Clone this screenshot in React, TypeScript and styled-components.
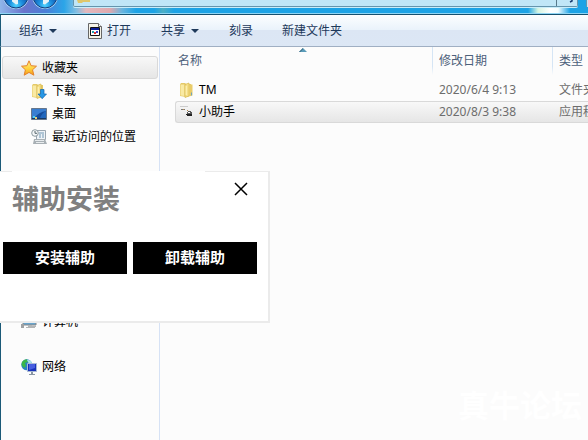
import React from "react";
import styled, { createGlobalStyle } from "styled-components";

const Global = createGlobalStyle`
  *, *::before, *::after { box-sizing: border-box; }
  body {
    margin: 0;
    background: #fcfcfc;
    color: #000;
    font: 12px/20px "Noto Sans", "Noto Sans CJK SC", sans-serif;
  }
  button { font: inherit; }
`;

const Desktop = styled.div`
  position: relative;
  display: flex;
  flex-direction: column;
  height: 100vh;
  overflow: hidden;
`;

const TitleBar = styled.header`
  display: flex;
  align-items: flex-start;
  height: 15px;
  flex: none;
  overflow: hidden;
  border-bottom: 1px solid #15506f;
  box-shadow: inset 0 -1px #8fd6f5;
  background: linear-gradient(90deg, #8fb6ea 0, #6a74cc 24px, #4a7fd8 46px, #2ba5e8 64px, #7fbde2 76px, #e3b8bd 86px, #dfa9ae 110px, #6ab5df 122px, #1ca3e6 136px, #1ca3e6 154px, #4cafc5 163px, #1ca3e6 174px, #1ca3e6 528px, #d5f5e2 538px, #fff 550px, #f4fdff 558px, #1ca3e6 570px);
`;

const NavOrbs = styled.div`
  flex: none;
  width: 73px;
  height: 10px;
  svg { display: block; }
`;

const AddressBar = styled.div`
  flex: 1;
  display: flex;
  justify-content: space-between;
  height: 7px;
  margin-right: 8px;
  padding-left: 3px;
  border: 1px solid #6595ad;
  border-top: 0;
  border-radius: 0 0 2px 2px;
  background: #c0e6f7;
  box-shadow: 0 1px #c9edfa;
  svg { display: block; }
`;

const Refresh = styled.span`
  display: flex;
  justify-content: center;
  width: 21px;
  height: 6px;
  padding-left: 8px;
  border-left: 1px solid #57798b;
`;

const SearchEdge = styled.div`
  width: 2px;
  height: 7px;
  background: #c0e6f7;
  border-left: 1px solid #6595ad;
`;

const Toolbar = styled.nav`
  display: flex;
  flex: none;
  align-items: center;
  height: 32px;
  padding-left: 18px;
  border-left: 1px solid #1b5a78;
  border-bottom: 1px solid #a0afc3;
  background: linear-gradient(#fcfeff 0, #e9f2fb 50%, #dce6f4 50%, #dce7f5 100%);
`;

const ToolButton = styled.button<{ $gap: number }>`
  display: flex;
  align-items: center;
  gap: 5px;
  margin: 0 ${(p) => p.$gap}px 0 0;
  padding: 0;
  border: 0;
  background: none;
  color: #1e395b;
  white-space: nowrap;
`;

const Caret = styled.span`
  margin-left: 1px;
  border: 4px solid transparent;
  border-top-color: #1e395b;
  border-bottom: 0;
`;

const Explorer = styled.div`
  display: flex;
  flex: 1;
  min-height: 0;
  border-left: 1px solid #1b5a78;
`;

const Sidebar = styled.aside`
  display: flex;
  flex: none;
  flex-direction: column;
  width: 159px;
  padding: 9px 1px 0;
  border-right: 1px solid #d6e2f5;
`;

const Group = styled.div<{ $before?: number }>`
  display: flex;
  flex-direction: column;
  margin-top: ${(p) => p.$before ?? 0}px;
`;

const Place = styled.a<{ $nested?: boolean; $active?: boolean }>`
  display: flex;
  align-items: center;
  gap: 5px;
  height: 23px;
  padding-left: ${(p) => (p.$nested ? 28 : 18)}px;
  border: 1px solid ${(p) => (p.$active ? "#d9d9d9" : "transparent")};
  border-radius: 3px;
  background: ${(p) => (p.$active ? "linear-gradient(#f8f8f8, #e6e6e6)" : "none")};
  color: #000;
  text-decoration: none;
  white-space: nowrap;
  svg { flex: none; }
`;

const Files = styled.main`
  flex: 1;
  min-width: 0;
  padding-left: 15px;
  overflow: hidden;
`;

const FileTable = styled.table`
  width: 100%;
  table-layout: fixed;
  border-spacing: 0;
`;

const Head = styled.th<{ $width?: number; $first?: boolean }>`
  position: relative;
  width: ${(p) => (p.$width ? `${p.$width}px` : "auto")};
  height: 32px;
  padding: 4px 0 0 ${(p) => (p.$first ? 3 : 6)}px;
  border-left: ${(p) => (p.$first ? 0 : 1)}px solid;
  border-image: linear-gradient(#d5e5f5 60%, transparent 85%) 1;
  color: #4c607a;
  font-weight: 400;
  text-align: left;
  vertical-align: top;
  white-space: nowrap;
  overflow: hidden;
`;

const SortMark = styled.svg`
  position: absolute;
  top: 1px;
  left: calc(50% - 5px);
`;

const Cell = styled.td<{ $selected?: boolean }>`
  height: 22px;
  padding: 0 0 0 7px;
  border: solid ${(p) => (p.$selected ? "#d9d9d9" : "transparent")};
  border-width: 1px 0;
  background: ${(p) => (p.$selected ? "linear-gradient(#f8f8f8, #e6e6e6)" : "none")};
  color: #6d6d6d;
  white-space: nowrap;
  overflow: hidden;
`;

const NameCell = styled(Cell)`
  padding-left: 3px;
  border-left-width: 1px;
  border-radius: 3px 0 0 3px;
  color: #000;
`;

const FileName = styled.span`
  display: flex;
  align-items: center;
  gap: 4px;
`;

const Watermark = styled.div`
  position: absolute;
  right: 6px;
  bottom: 16px;
  color: #fff;
  font: 700 31px/40px "Noto Sans CJK SC", sans-serif;
`;

const Dialog = styled.section`
  position: absolute;
  top: 171px;
  left: 0;
  width: 270px;
  height: 152px;
  padding: 0 11px 0 3px;
  border: solid #ebebeb;
  border-width: 1px 2px 2px 0;
  background: #fff;
`;

const DialogHeader = styled.div`
  display: flex;
  justify-content: space-between;
  height: 70px;
`;

const DialogTitle = styled.h1`
  width: 193px;
  height: 54px;
  margin: -1px 0 0 9px;
  background: #fff;
  color: #808080;
  font: 700 27px/54px "Noto Sans CJK SC", sans-serif;
`;

const CloseButton = styled.button`
  width: 32px;
  height: 32px;
  padding: 0;
  border: 0;
  background: none;
  svg { display: block; margin: 2px auto 0; }
`;

const Actions = styled.div`
  display: grid;
  grid-template-columns: 1fr 1fr;
  gap: 6px;
`;

const ActionButton = styled.button`
  height: 32px;
  padding: 0 0 2px;
  border: 0;
  background: #000;
  color: #fff;
  font: 700 15px/30px "Noto Sans CJK SC", sans-serif;
`;

const OrbIcons = () => (
  <svg width="73" height="10" viewBox="0 0 73 10" aria-hidden="true">
    <defs>
      <radialGradient id="orb" cx="50%" cy="88%" r="55%">
        <stop offset="0" stopColor="#4fd4ff" />
        <stop offset=".45" stopColor="#1f93e0" />
        <stop offset="1" stopColor="#0d55ae" />
      </radialGradient>
    </defs>
    {[16, 45].map((x) => (
      <g key={x}>
        <circle cx={x} cy="-4" r="13" fill="#a9d7f3" />
        <circle cx={x} cy="-4" r="12" fill="url(#orb)" stroke="#163e7d" />
      </g>
    ))}
    <path d="M12 0h6v4l-2 .5-4-3z" fill="#e5f2f8" />
    <path d="M43 0h6v1.5l-4 3-2-.5z" fill="#e5f2f8" />
  </svg>
);

const FolderIcon = ({ download = false }: { download?: boolean }) => (
  <svg width="16" height="16" viewBox="0 0 16 16" aria-hidden="true">
    <path d="M1 2.5 2 1h4l1 1h5v12l-5 1-6-1z" fill="#e4c968" />
    <path d="M1.5 2.5h4V14l-4-.5z" fill="#f9eaa4" />
    <path d="M6 2.5 10 1v13l-4 1.5z" fill="#f5df88" stroke="#d7b84d" strokeWidth=".7" />
    <path d="M7.2 4v9" stroke="#fff5bd" strokeWidth="1" />
    {download ? (
      <path d="M9.5 6.5h3.5V11h2.5L11.2 15.7 7 11h2.5z" fill="#2797e5" stroke="#1264ae" strokeWidth=".7" />
    ) : (
      <>
        <path d="M10 2.5h3.5v11L10 14z" fill="#e9cc69" />
        <path d="M12.5 10.5v3" stroke="#6fa5bd" />
      </>
    )}
  </svg>
);

const AppIcon = () => (
  <svg width="14" height="16" viewBox="0 0 14 16" aria-hidden="true">
    <path d="M.5.5h10l3 3v12H.5z" fill="#f5f3e9" stroke="#666" />
    <path d="M10.5.5v3h3" fill="#fff" stroke="#666" />
    <path d="M2.5 4.5h9v8h-9z" fill="#fff" stroke="#111" />
    <path d="M3 5h8v2H3z" fill="#081a94" />
    <path d="M4 8h2v2H4z" fill="#21a4ad" />
    <path d="M6 9h2v2H6z" fill="#e13435" />
    <path d="M8 8h2v2H8z" fill="#3a45cb" />
  </svg>
);

const StarIcon = () => (
  <svg width="16" height="16" viewBox="0 0 16 16" aria-hidden="true">
    <defs>
      <linearGradient id="star" x2="0" y2="1">
        <stop stopColor="#fff08d" />
        <stop offset=".55" stopColor="#ffd23c" />
        <stop offset="1" stopColor="#f49a1d" />
      </linearGradient>
    </defs>
    <path d="m8 .8 2.1 4.9 5.4.5-4 3.6 1.4 5.4L8 12.4l-4.8 2.8 1.2-5.4-3.9-3.6 5.4-.5z" fill="url(#star)" stroke="#e4822a" strokeLinejoin="round" />
  </svg>
);

const DesktopIcon = () => (
  <svg width="16" height="16" viewBox="0 0 16 16" aria-hidden="true">
    <path d="M.5 2.5h15v11H.5z" fill="#164c9b" stroke="#66778c" />
    <path d="M1 3h14v2Q8 6 3 12H1z" fill="#397ed1" />
    <path d="M9 12Q11 7 15 5v7z" fill="#2167bd" />
    <path d="M1 12h14v1H1z" fill="#163864" />
    <path d="M2 10h2v2H2z" fill="#4cd0ed" />
    <path d="M4 11h2v2H4z" fill="#e8ce76" />
  </svg>
);

const RecentIcon = () => (
  <svg width="16" height="16" viewBox="0 0 16 16" aria-hidden="true">
    <path d="M5.5 1.5h9v9h-9z" fill="#eef3f7" stroke="#9ba7b1" />
    <path d="M8 4h5M8 6h2M11 6h2M8 8h2M11 8h2" stroke="#7197b4" />
    <path d="M3 10h11l2 5H2z" fill="#a8b0b5" />
    <path d="M4 11h9v1H4zM5 13h8v1H5z" fill="#e8ecee" />
    <circle cx="4" cy="4" r="3.3" fill="#f5f7f8" stroke="#8b999f" />
    <path d="M4 2v2.3h2" fill="none" stroke="#54646b" />
  </svg>
);

const ComputerIcon = () => (
  <svg width="16" height="16" viewBox="0 0 16 16" aria-hidden="true">
    <path d="M2 2h13v9H2z" fill="#69a4cc" stroke="#888" />
    <path d="M7 11h4v1h4v1h-1v1H5v-1h2z" fill="#b3b5b6" />
    <path d="M0 10h3v4H0z" fill="#a0a2a3" />
  </svg>
);

const NetworkIcon = () => (
  <svg width="16" height="16" viewBox="0 0 16 16" aria-hidden="true">
    <circle cx="5.8" cy="5.8" r="5.5" fill="#2783c4" />
    <path d="M1 3Q3 0 6 .4L7 3 4 4 5 7 3 9 .5 6z" fill="#39b64a" />
    <path d="M6 1q4-.5 5 3l-3 1z" fill="#a9e2e8" />
    <path d="M6.5 4.5h9v8h-9z" fill="#1731b9" stroke="#a8b9d3" />
    <path d="M8 5h6v4l-6 2z" fill="#465ee0" />
    <path d="M10 13h2v2h2v1H8v-1h2z" fill="#8995a4" />
  </svg>
);

const HelperIcon = () => (
  <svg width="16" height="16" viewBox="0 0 16 16" aria-hidden="true">
    <path d="M1 2.5h8" stroke="#ccc" />
    <path d="M2 5h2v1H2zM5 5h1v1H5z" fill="#777" />
    <path d="M4 5h1v1H4zM8 6h1v1H8z" fill="#b98c4c" />
    <path d="M8 8h1V7h3v1h1v2H8z" fill="#555" />
    <path d="M9 8h2v1H9z" fill="#fff" />
    <path d="M7 10h6v2H8v-1H7z" fill="#222" />
  </svg>
);

const files = [
  { name: "TM", date: "2020/6/4 9:13", type: "文件夹", icon: <FolderIcon />, selected: false },
  { name: "小助手", date: "2020/8/3 9:38", type: "应用程序", icon: <HelperIcon />, selected: true },
];

export default function App() {
  return (
    <Desktop>
      <Global />
      <TitleBar>
        <NavOrbs><OrbIcons /></NavOrbs>
        <AddressBar>
          <svg width="14" height="4" viewBox="0 0 14 4" aria-hidden="true">
            <path d="M0 0h13v2H6L5 3H1z" fill="#dfc66b" />
          </svg>
          <Refresh>
            <svg width="6" height="3" viewBox="0 0 6 3" aria-hidden="true">
              <path d="M4 0v1L2 2" fill="none" stroke="#173d72" strokeWidth="1.5" />
            </svg>
          </Refresh>
        </AddressBar>
        <SearchEdge />
      </TitleBar>
      <Toolbar>
        <ToolButton $gap={31}>组织<Caret /></ToolButton>
        <ToolButton $gap={30}><AppIcon />打开</ToolButton>
        <ToolButton $gap={30}>共享<Caret /></ToolButton>
        <ToolButton $gap={29}>刻录</ToolButton>
        <ToolButton $gap={0}>新建文件夹</ToolButton>
      </Toolbar>
      <Explorer>
        <Sidebar>
          <Group>
            <Place href="#favorites" $active><StarIcon />收藏夹</Place>
            <Place href="#downloads" $nested><FolderIcon download />下载</Place>
            <Place href="#desktop" $nested><DesktopIcon />桌面</Place>
            <Place href="#recent" $nested><RecentIcon />最近访问的位置</Place>
          </Group>
          <Group $before={162}>
            <Place href="#computer"><ComputerIcon />计算机</Place>
          </Group>
          <Group $before={22}>
            <Place href="#network"><NetworkIcon />网络</Place>
          </Group>
        </Sidebar>
        <Files>
          <FileTable>
            <thead>
              <tr>
                <Head $width={257} $first>
                  名称
                  <SortMark width="8" height="4" viewBox="0 0 8 4" aria-hidden="true">
                    <path d="M4 0 8 4H0z" fill="#5a9bb8" />
                    <path d="M4 0v1L1 4H0z" fill="#285b75" />
                  </SortMark>
                </Head>
                <Head $width={120}>修改日期</Head>
                <Head>类型</Head>
              </tr>
            </thead>
            <tbody>
              {files.map((f) => (
                <tr key={f.name}>
                  <NameCell $selected={f.selected}><FileName>{f.icon}{f.name}</FileName></NameCell>
                  <Cell $selected={f.selected}>{f.date}</Cell>
                  <Cell $selected={f.selected}>{f.type}</Cell>
                </tr>
              ))}
            </tbody>
          </FileTable>
        </Files>
      </Explorer>
      <Watermark>真牛论坛</Watermark>
      <Dialog role="dialog" aria-labelledby="dialog-title">
        <DialogHeader>
          <DialogTitle id="dialog-title">辅助安装</DialogTitle>
          <CloseButton aria-label="关闭">
            <svg width="14" height="14" viewBox="0 0 14 14" aria-hidden="true">
              <path d="m1 1 12 12M13 1 1 13" stroke="#000" strokeWidth="1.5" />
            </svg>
          </CloseButton>
        </DialogHeader>
        <Actions>
          <ActionButton>安装辅助</ActionButton>
          <ActionButton>卸载辅助</ActionButton>
        </Actions>
      </Dialog>
    </Desktop>
  );
}
